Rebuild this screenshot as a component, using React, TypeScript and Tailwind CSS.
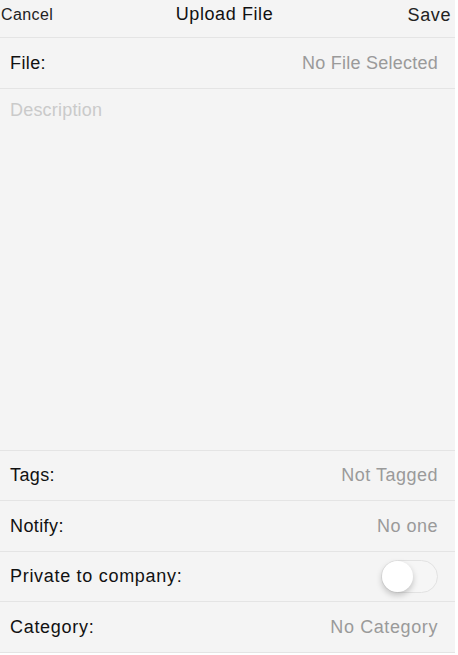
import React, { useState } from 'react';

const rows = [
  { label: 'Tags:', value: 'Not Tagged', h: 'h-[50px]' },
  { label: 'Notify:', value: 'No one', h: 'h-[51px]' },
];

export default function App() {
  const [isPrivate, setIsPrivate] = useState(false);

  return (
    <div className="min-h-[655px] w-[458px] bg-white" style={{ fontFamily: '"Liberation Sans", Arial, sans-serif' }}>
      <div className="flex w-[455px] flex-col bg-[#f4f4f4]">
        {/* Header */}
        <div className="relative flex h-[38px] items-center justify-between border-b border-[#e4e4e4] pb-[7px]">
          <button className="pl-[1px] text-[16px] tracking-[0.4px] text-[#222]">Cancel</button>
          <span className="absolute left-[calc(50%-3px)] top-[1px] -translate-x-1/2 text-[18px] tracking-[0.6px] text-[#111]">Upload File</span>
          <button className="pr-[4px] text-[18px] tracking-[0.6px] text-[#222]">Save</button>
        </div>

        {/* File */}
        <div className="flex h-[51px] items-center justify-between border-b border-[#e4e4e4] pl-[10px] pr-[17px]">
          <span className="text-[18px] tracking-[0.4px] text-[#111]">File:</span>
          <span className="text-[18px] tracking-[0.25px] text-[#9a9a9a]">No File Selected</span>
        </div>

        {/* Description */}
        <div className="h-[362px] border-b border-[#e4e4e4] px-[10px] pt-[8px]">
          <span className="text-[18px] tracking-[0.2px] text-[#cacaca]">Description</span>
        </div>

        {rows.map((r) => (
          <div key={r.label} className={`flex ${r.h} items-center justify-between border-b border-[#e4e4e4] pl-[10px] pr-[17px]`}>
            <span className="text-[18px] tracking-[0.4px] text-[#111]">{r.label}</span>
            <span className="text-[18px] tracking-[0.5px] text-[#9a9a9a]">{r.value}</span>
          </div>
        ))}

        {/* Private toggle */}
        <div className="flex h-[50px] items-center justify-between border-b border-[#e4e4e4] pl-[10px] pr-[17px]">
          <span className="text-[18px] tracking-[0.7px] text-[#111]">Private to company:</span>
          <button
            onClick={() => setIsPrivate(!isPrivate)}
            className={`relative h-[33px] w-[57px] rounded-full border ${isPrivate ? 'border-[#4cd964] bg-[#4cd964]' : 'border-[#e2e2e2] bg-[#f6f6f6]'}`}
          >
            <span
              className={`absolute top-[0px] h-[31px] w-[31px] rounded-full bg-white shadow-[0_3px_6px_rgba(0,0,0,0.22)] ${isPrivate ? 'left-[24px]' : 'left-[0px]'}`}
            />
          </button>
        </div>

        {/* Category */}
        <div className="flex h-[51px] items-center justify-between border-b border-[#e4e4e4] pl-[10px] pr-[17px]">
          <span className="text-[18px] tracking-[0.7px] text-[#111]">Category:</span>
          <span className="text-[18px] tracking-[0.6px] text-[#9a9a9a]">No Category</span>
        </div>
      </div>
    </div>
  );
}
